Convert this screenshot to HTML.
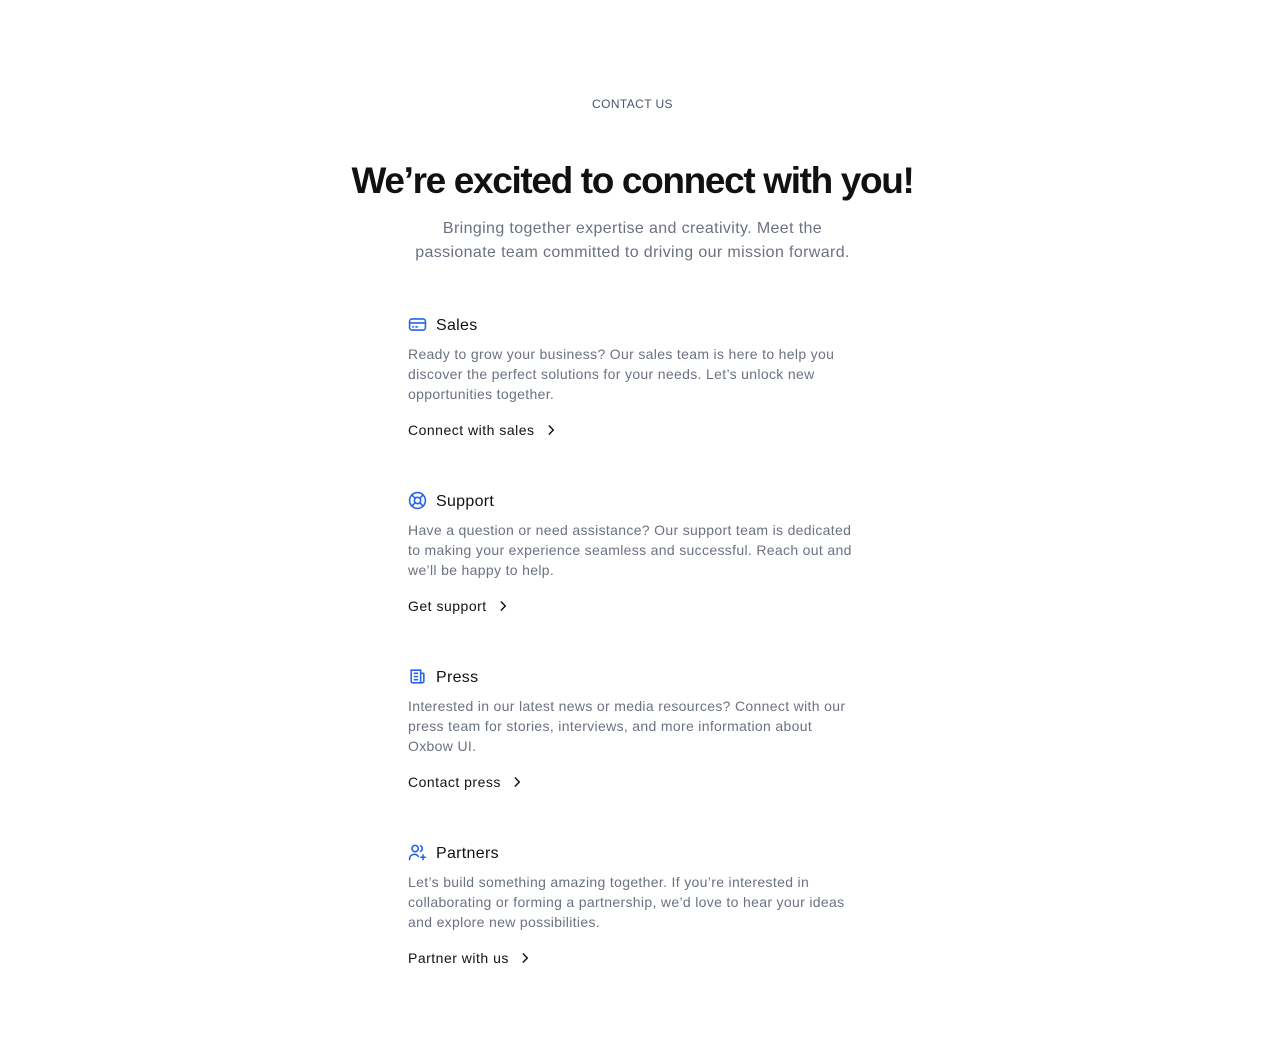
<!DOCTYPE html>
<html><head><style>
body{margin:0;background:#fff;font-family:"Liberation Sans",sans-serif;}
.eyebrow{position:absolute;top:96px;left:0;width:1265px;text-align:center;font-size:12px;color:#4b5563;letter-spacing:0.4px;line-height:16px}
h1{position:absolute;top:158px;left:0;width:1265px;text-align:center;margin:0;font-size:37px;font-weight:700;color:#111;letter-spacing:-1.35px;line-height:46px}
.sub{position:absolute;top:217px;left:0;width:1265px;text-align:center;font-size:16px;line-height:24px;color:#6b7280;letter-spacing:0.37px}
.sec{position:absolute;left:408px;width:450px}
.hd{display:flex;align-items:center;font-size:16px;color:#111;height:24px;letter-spacing:0.3px}
.hd svg{margin-right:9px;position:relative;top:-2px}
.ds{margin-top:6px;font-size:14px;line-height:20px;color:#6b7280;letter-spacing:0.33px}
.lk{margin-top:16px;font-size:14px;line-height:20px;color:#111;display:flex;align-items:center;letter-spacing:0.5px}
.lk svg{margin-left:9px}
</style></head><body>
<div class="eyebrow">CONTACT US</div>
<h1>We’re excited to connect with you!</h1>
<div class="sub">Bringing together expertise and creativity. Meet the<br>passionate team committed to driving our mission forward.</div>

<div class="sec" style="top:314px">
<div class="hd"><svg width="19" height="19" viewBox="0 0 24 24" fill="none" stroke="#2563eb" stroke-width="2" stroke-linecap="round"><rect x="2" y="5" width="20" height="14" rx="3"/><path d="M2 10h20M6 15h1M10 15h2"/></svg>Sales</div>
<div class="ds">Ready to grow your business? Our sales team is here to help you discover the perfect solutions for your needs. Let’s unlock new opportunities together.</div>
<div class="lk">Connect with sales<svg width="14" height="14" viewBox="0 0 24 24" fill="none" stroke="#111" stroke-width="2.5" stroke-linecap="round" stroke-linejoin="round"><path d="M9 5l7 7-7 7"/></svg></div>
</div>

<div class="sec" style="top:490px">
<div class="hd"><svg width="19" height="19" viewBox="0 0 24 24" fill="none" stroke="#2563eb" stroke-width="2" stroke-linecap="round"><circle cx="12" cy="12" r="10"/><circle cx="12" cy="12" r="4"/><path d="M4.9 4.9l4.3 4.3M14.8 14.8l4.3 4.3M14.8 9.2l4.3-4.3M9.2 14.8l-4.3 4.3"/></svg>Support</div>
<div class="ds">Have a question or need assistance? Our support team is dedicated to making your experience seamless and successful. Reach out and we’ll be happy to help.</div>
<div class="lk">Get support<svg width="14" height="14" viewBox="0 0 24 24" fill="none" stroke="#111" stroke-width="2.5" stroke-linecap="round" stroke-linejoin="round"><path d="M9 5l7 7-7 7"/></svg></div>
</div>

<div class="sec" style="top:666px">
<div class="hd"><svg width="19" height="19" viewBox="0 0 24 24" fill="none" stroke="#2563eb" stroke-width="2" stroke-linecap="round"><path d="M4 4h12v16H6a2 2 0 0 1-2-2z"/><path d="M16 8h3a1 1 0 0 1 1 1v9a2 2 0 0 1-2 2h-2M8 8h4M8 12h4M8 16h4"/></svg>Press</div>
<div class="ds">Interested in our latest news or media resources? Connect with our press team for stories, interviews, and more information about Oxbow UI.</div>
<div class="lk">Contact press<svg width="14" height="14" viewBox="0 0 24 24" fill="none" stroke="#111" stroke-width="2.5" stroke-linecap="round" stroke-linejoin="round"><path d="M9 5l7 7-7 7"/></svg></div>
</div>

<div class="sec" style="top:842px">
<div class="hd"><svg width="19" height="19" viewBox="0 0 24 24" fill="none" stroke="#2563eb" stroke-width="2" stroke-linecap="round"><circle cx="9" cy="7" r="4"/><path d="M2 21v-1a6 6 0 0 1 11-3M16 3.5a4 4 0 0 1 0 7M19 15v6M16 18h6"/></svg>Partners</div>
<div class="ds">Let’s build something amazing together. If you’re interested in collaborating or forming a partnership, we’d love to hear your ideas and explore new possibilities.</div>
<div class="lk">Partner with us<svg width="14" height="14" viewBox="0 0 24 24" fill="none" stroke="#111" stroke-width="2.5" stroke-linecap="round" stroke-linejoin="round"><path d="M9 5l7 7-7 7"/></svg></div>
</div>
</body></html>
